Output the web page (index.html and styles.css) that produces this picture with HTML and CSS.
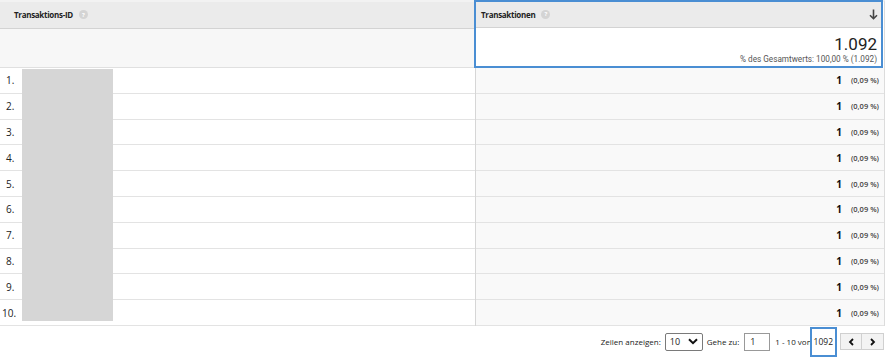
FILE: index.html
```html
<!DOCTYPE html>
<html lang="de">
<head>
<meta charset="utf-8">
<link rel="stylesheet" href="styles.css">
</head>
<body>
<div class="table">
  <div class="col col-left">
    <div class="head"><span class="htxt">Transaktions-ID</span><span class="q">?</span></div>
    <div class="sum"></div>
    <div class="rows">
      <div class="row"><span class="idx">1.</span></div>
      <div class="row"><span class="idx">2.</span></div>
      <div class="row"><span class="idx">3.</span></div>
      <div class="row"><span class="idx">4.</span></div>
      <div class="row"><span class="idx">5.</span></div>
      <div class="row"><span class="idx">6.</span></div>
      <div class="row"><span class="idx">7.</span></div>
      <div class="row"><span class="idx">8.</span></div>
      <div class="row"><span class="idx">9.</span></div>
      <div class="row"><span class="idx idx10">10.</span></div>
      <div class="redact"></div>
    </div>
  </div>
  <div class="col col-right">
    <div class="hl">
      <div class="head"><span class="htxt">Transaktionen</span><span class="q">?</span><span class="sort">
        <svg width="9" height="11" viewBox="0 0 9 11"><path d="M4.5 0.5V9.5M1 6.2L4.5 9.7L8 6.2" fill="none" stroke="#444" stroke-width="1.6"/></svg></span></div>
      <div class="sum sum-r">
        <div class="total">1.092</div>
        <div class="pct">% des Gesamtwerts: 100,00 % (1.092)</div>
      </div>
    </div>
    <div class="rows">
      <div class="row vr"><b>1</b><span class="p">(0,09 %)</span></div>
      <div class="row vr"><b>1</b><span class="p">(0,09 %)</span></div>
      <div class="row vr"><b>1</b><span class="p">(0,09 %)</span></div>
      <div class="row vr"><b>1</b><span class="p">(0,09 %)</span></div>
      <div class="row vr"><b>1</b><span class="p">(0,09 %)</span></div>
      <div class="row vr"><b>1</b><span class="p">(0,09 %)</span></div>
      <div class="row vr"><b>1</b><span class="p">(0,09 %)</span></div>
      <div class="row vr"><b>1</b><span class="p">(0,09 %)</span></div>
      <div class="row vr"><b>1</b><span class="p">(0,09 %)</span></div>
      <div class="row vr"><b>1</b><span class="p">(0,09 %)</span></div>
    </div>
  </div>
</div>
<div class="pager">
  <span class="lbl">Zeilen anzeigen:</span>
  <span class="select">10<svg width="10" height="7" viewBox="0 0 10 7"><path d="M1 1.2L5 5.2L9 1.2" fill="none" stroke="#111" stroke-width="2"/></svg></span>
  <span class="lbl">Gehe zu:</span>
  <span class="input">1</span>
  <span class="lbl range">1 - 10 von</span>
  <span class="count">1092</span>
  <span class="btns">
    <span class="btn"><svg width="6" height="8" viewBox="0 0 6 8"><path d="M5 1L2 4L5 7" fill="none" stroke="#111" stroke-width="1.8"/></svg></span>
    <span class="btn"><svg width="6" height="8" viewBox="0 0 6 8"><path d="M1 1L4 4L1 7" fill="none" stroke="#111" stroke-width="1.8"/></svg></span>
  </span>
</div>
</body>
</html>
```
FILE: styles.css
```css
* { box-sizing: border-box; }
body {
  margin: 0;
  background: #fff;
  font-family: "Liberation Sans", Arial, sans-serif;
  color: #222;
  width: 888px;
  height: 360px;
  overflow: hidden;
}
.table {
  display: flex;
  width: 885px;
  border-top: 2px solid #f2f2f2;
  border-right: 1px solid #dcdcdc;
}
.col-left {
  width: 476px;
  border-right: 1px solid #d6d6d6;
}
.col-right {
  flex: 1;
  margin-top: -2px;
}
.head {
  height: 27px;
  background: #ebebeb;
  border-bottom: 1px solid #d3d3d3;
  display: flex;
  align-items: center;
  padding-left: 14px;
  padding-bottom: 1px;
  font-family: "Open Sans", sans-serif;
  font-weight: 700;
  font-size: 8px;
  color: #222;
  letter-spacing: -0.3px;
}
.q {
  display: inline-flex;
  align-items: center;
  justify-content: center;
  width: 9px;
  height: 9px;
  border-radius: 50%;
  background: #d4d4d4;
  color: #fff;
  font-size: 6px;
  margin-left: 6px;
  letter-spacing: 0;
}
.sum {
  height: 39px;
  background: #f7f7f7;
  border-bottom: 1px solid #e0e0e0;
}
.hl {
  border: 2px solid #4a8ed3;
  margin-left: -2px;
  margin-right: 1px;
}
.hl .head {
  height: 26px;
  padding-left: 5px;
  padding-right: 3px;
}
.sort {
  margin-left: auto;
  display: flex;
}
.sum-r {
  background: #fff;
  border-bottom: 0;
  height: 38px;
  padding: 7px 4px 0 0;
  text-align: right;
  font-family: Roboto, sans-serif;
}
.total {
  font-size: 17px;
  line-height: 18px;
  color: #222;
}
.pct {
  font-size: 8.2px;
  color: #555;
  margin-top: 1px;
}
.rows {
  position: relative;
}
.row {
  height: 25.8px;
  border-bottom: 1px solid #e3e3e3;
  display: flex;
  align-items: center;
  font-size: 10px;
}
.idx {
  padding-left: 6px;
  font-family: "Open Sans", sans-serif;
  font-size: 10px;
  color: #222;
}
.idx10 { padding-left: 2px; }
.redact {
  position: absolute;
  left: 22px;
  top: 1px;
  width: 91px;
  height: 252px;
  background: #d6d6d6;
}
.vr {
  background: #f9f9f9;
  justify-content: flex-end;
  padding-right: 5px;
  font-family: "Open Sans", sans-serif;
}
.vr b {
  font-size: 10px;
  font-weight: 700;
  color: #111;
}
.p {
  font-size: 7.5px;
  color: #444;
  margin-left: 9px;
  font-weight: 600;
}
.pager {
  width: 884px;
  display: flex;
  justify-content: flex-end;
  align-items: center;
  height: 32px;
  font-family: "Open Sans", sans-serif;
  font-size: 8px;
  color: #222;
}
.lbl { margin-right: 4px; }
.select {
  width: 38px;
  height: 18px;
  border: 1px solid #7a7a7a;
  border-radius: 2px;
  display: flex;
  align-items: center;
  justify-content: space-between;
  padding: 0 4px 0 4px;
  margin-right: 4px;
  font-size: 9px;
}
.input {
  width: 26px;
  height: 18px;
  border: 1px solid #999;
  display: flex;
  align-items: center;
  padding-left: 5px;
  margin-right: 5px;
  font-size: 9px;
  margin-left: 1px;
}
.range { margin-right: -2px; }
.count {
  height: 30px;
  border: 2px solid #4a8ed3;
  display: flex;
  align-items: center;
  padding: 0 2px;
  font-size: 8.5px;
}
.btns {
  display: flex;
  margin-left: 3px;
}
.btn {
  width: 22px;
  height: 17px;
  background: #f3f3f3;
  border: 1px solid #d0d0d0;
  display: flex;
  align-items: center;
  justify-content: center;
}
.btn + .btn { border-left: 0; }
```
